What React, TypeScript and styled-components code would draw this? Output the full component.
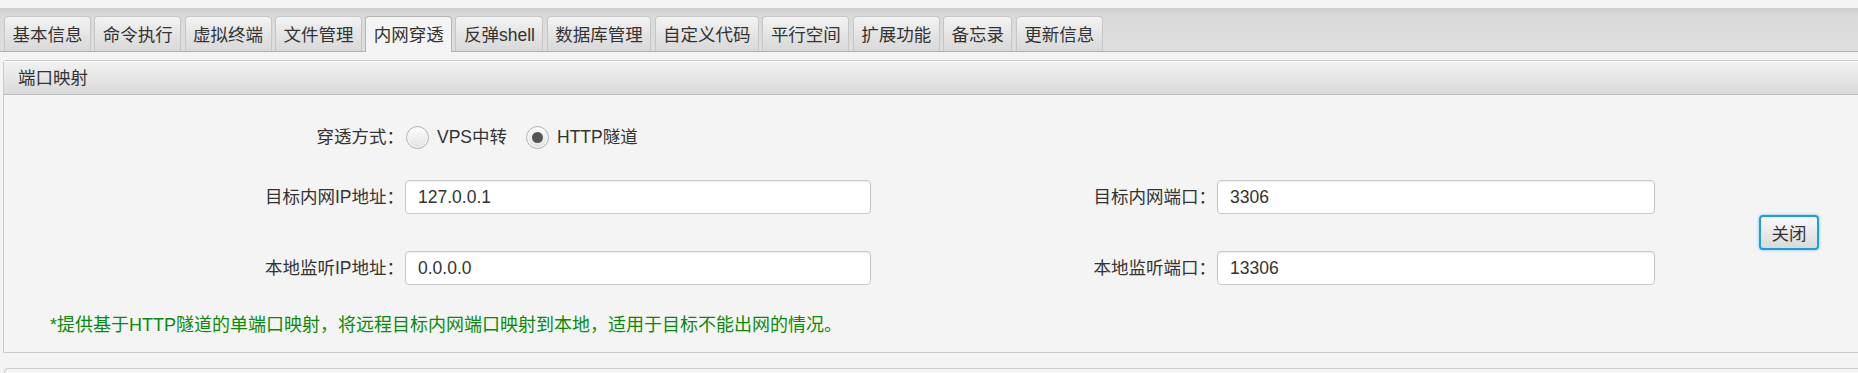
import { useState } from 'react';
import styled, { createGlobalStyle } from 'styled-components';

const GlobalStyle = createGlobalStyle`
  html, body {
    margin: 0;
    padding: 0;
    background: #f4f4f4;
    overflow: hidden;
  }
  body {
    font-family: "Liberation Sans", "Noto Sans CJK SC", sans-serif;
    font-size: 17.5px;
    color: #333;
  }
`;

const TABS = [
  '基本信息',
  '命令执行',
  '虚拟终端',
  '文件管理',
  '内网穿透',
  '反弹shell',
  '数据库管理',
  '自定义代码',
  '平行空间',
  '扩展功能',
  '备忘录',
  '更新信息',
];

const App = () => {
  const [mode, setMode] = useState('http');
  const active = '内网穿透';

  return (
    <Page>
      <GlobalStyle />
      <TabBar>
        {TABS.map((t) => (
          <Tab key={t} $active={t === active}>
            {t}
          </Tab>
        ))}
      </TabBar>

      <Panel>
        <PanelHeader>端口映射</PanelHeader>
        <PanelBody>
          <FormGrid>
            <Label $row={1}>穿透方式：</Label>
            <RadioGroup>
              <RadioOption onClick={() => setMode('vps')}>
                <Radio $checked={mode === 'vps'} />
                VPS中转
              </RadioOption>
              <RadioOption onClick={() => setMode('http')}>
                <Radio $checked={mode === 'http'} />
                HTTP隧道
              </RadioOption>
            </RadioGroup>

            <Label $row={3}>目标内网IP地址：</Label>
            <Input $row={3} defaultValue="127.0.0.1" />
            <Label $row={3}>目标内网端口：</Label>
            <Input $row={3} defaultValue="3306" />

            <Label $row={5}>本地监听IP地址：</Label>
            <Input $row={5} defaultValue="0.0.0.0" />
            <Label $row={5}>本地监听端口：</Label>
            <Input $row={5} defaultValue="13306" />

            <CloseButton>关闭</CloseButton>
          </FormGrid>
          <Note>*提供基于HTTP隧道的单端口映射，将远程目标内网端口映射到本地，适用于目标不能出网的情况。</Note>
        </PanelBody>
      </Panel>

      <NextPanel />
    </Page>
  );
};

const Page = styled.div`
  padding-top: 8px;
  width: 100%;
`;

const TabBar = styled.div`
  display: flex;
  align-items: flex-end;
  gap: 3.3px;
  height: 43px;
  padding: 0 0 0 4px;
  background: linear-gradient(to bottom, #cecece 0px, #dadada 8px, #dedede 100%);
  border-bottom: 1px solid #aeaeae;
`;

const Tab = styled.div<{ $active?: boolean }>`
  box-sizing: border-box;
  height: ${(p) => (p.$active ? '36px' : '35px')};
  margin-bottom: ${(p) => (p.$active ? '-1px' : '0')};
  padding: 1px 7.5px 0;
  display: flex;
  align-items: center;
  white-space: nowrap;
  border: 1px solid ${(p) => (p.$active ? '#b4b4b4' : '#c6c6c6')};
  border-bottom: none;
  border-radius: 4px 4px 0 0;
  background: ${(p) =>
    p.$active ? '#f4f4f4' : 'linear-gradient(to bottom, #f3f3f3 0%, #e2e2e2 60%, #d9d9d9 100%)'};
  color: #333;
  line-height: 20px;
  cursor: pointer;
`;

const Panel = styled.div`
  margin: 8px -4px 0 3px;
  border: 1px solid #cbcbcb;
  border-radius: 3px 3px 0 0;
  background: #f4f4f4;
`;

const PanelHeader = styled.div`
  box-sizing: border-box;
  height: 34px;
  padding: 1px 0 0 14px;
  display: flex;
  align-items: center;
  background: linear-gradient(to bottom, #f2f2f2 0%, #e6e6e6 50%, #d9d9d9 100%);
  border-bottom: 1px solid #bdbdbd;
  box-shadow: inset 0 1px 0 #fbfbfb;
  line-height: 20px;
`;

const PanelBody = styled.div`
  padding: 25px 0 17px;
`;

const FormGrid = styled.div`
  display: grid;
  grid-template-columns: 401px 466px 346px 438px 1fr;
  grid-template-rows: 34px 26px 34px 37px 34px;
`;

const Label = styled.div<{ $row: number }>`
  grid-row: ${(p) => p.$row};
  display: flex;
  align-items: center;
  justify-content: flex-end;
  padding-right: 1px;
  white-space: nowrap;
  line-height: 20px;
`;

const RadioGroup = styled.div`
  grid-row: 1;
  grid-column: 2 / 4;
  display: flex;
  align-items: center;
  gap: 19px;
  padding-left: 1px;
`;

const RadioOption = styled.label`
  display: flex;
  align-items: center;
  gap: 8px;
  cursor: pointer;
  line-height: 20px;
`;

const Radio = styled.span<{ $checked?: boolean }>`
  box-sizing: border-box;
  width: 23px;
  height: 23px;
  border-radius: 50%;
  border: 1px solid #b3b3b3;
  background: linear-gradient(to bottom, #fdfdfd 0%, #e2e2e2 100%);
  box-shadow: inset 0 0 0 1px #f7f7f7;
  position: relative;

  &::after {
    content: '';
    display: ${(p) => (p.$checked ? 'block' : 'none')};
    position: absolute;
    left: 50%;
    top: 50%;
    width: 11px;
    height: 11px;
    margin: -5.5px 0 0 -5.5px;
    border-radius: 50%;
    background: #555;
  }
`;

const Input = styled.input<{ $row: number }>`
  grid-row: ${(p) => p.$row};
  box-sizing: border-box;
  width: 100%;
  height: 34px;
  margin: 0;
  padding: 0 12px;
  border: 1px solid #c8c8c8;
  border-radius: 4px;
  background: #fff;
  box-shadow: inset 0 1px 2px rgba(0, 0, 0, 0.08);
  font-family: "Liberation Sans", "Noto Sans CJK SC", sans-serif;
  font-size: 17.5px;
  color: #333;
  outline: none;
`;

const CloseButton = styled.button`
  grid-column: 5;
  grid-row: 3 / 6;
  align-self: center;
  justify-self: start;
  margin-left: 104px;
  box-sizing: border-box;
  width: 60px;
  height: 35px;
  padding: 0;
  border: 2px solid #1aa0dc;
  border-radius: 4px;
  background: linear-gradient(to bottom, #fafafa 0%, #e6e6e6 60%, #dadada 100%);
  box-shadow: 0 0 3px rgba(60, 170, 230, 0.7);
  font-family: "Liberation Sans", "Noto Sans CJK SC", sans-serif;
  font-size: 17.5px;
  color: #333;
  cursor: pointer;
`;

const Note = styled.div`
  margin: 30px 0 0 46px;
  color: #0a8a0a;
  font-size: 18px;
  line-height: 20px;
`;

const NextPanel = styled.div`
  margin: 15px -4px 0 4px;
  height: 20px;
  border: 1px solid #cbcbcb;
  border-radius: 4px 4px 0 0;
  background: #f4f4f4;
`;

export default App;
